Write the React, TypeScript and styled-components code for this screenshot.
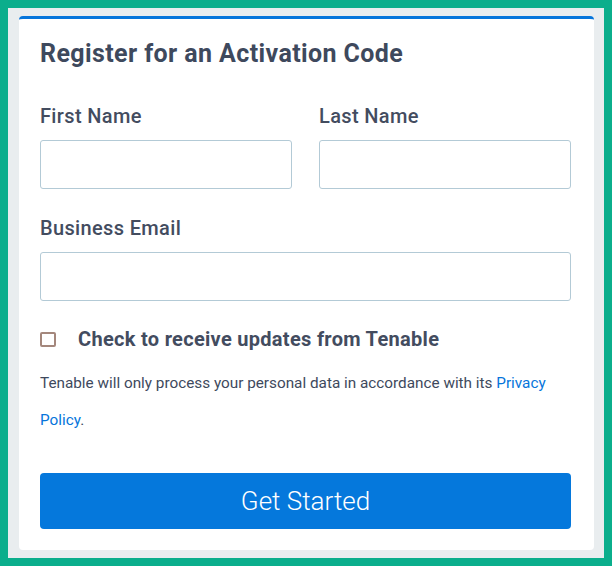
import React from "react";
import styled, { createGlobalStyle } from "styled-components";

const Global = createGlobalStyle`
  html, body { margin: 0; padding: 0; }
  body { background: #0bae8c; font-family: Roboto, "Liberation Sans", sans-serif; }
`;

const Frame = styled.div`
  width: 612px;
  height: 566px;
  box-sizing: border-box;
  padding: 8px;
  background: #0bae8c;
`;

const Backdrop = styled.div`
  height: 100%;
  box-sizing: border-box;
  padding: 8px 10px 8px 11px;
  background: #e9edef;
`;

const Card = styled.form`
  height: 100%;
  box-sizing: border-box;
  background: #ffffff;
  border-top: 3px solid #0675db;
  border-radius: 4px;
  padding: 20px 23px 0 21px;
  display: flex;
  flex-direction: column;
`;

const Title = styled.h1`
  margin: 0;
  font-size: 25px;
  line-height: 30px;
  font-weight: 700;
  color: #3e495d;
  letter-spacing: 0.4px;
`;

const Row = styled.div`
  display: grid;
  grid-template-columns: 1fr 1fr;
  column-gap: 27px;
  margin-top: 35px;
`;

const Field = styled.div<{ $top?: number }>`
  display: flex;
  flex-direction: column;
  margin-top: ${(p) => p.$top ?? 0}px;
`;

const Label = styled.label`
  font-size: 20px;
  line-height: 24px;
  font-weight: 500;
  color: #434c5f;
  letter-spacing: 0.35px;
  margin-bottom: 12px;
`;

const Input = styled.input`
  height: 49px;
  box-sizing: border-box;
  border: 1px solid #b3cad6;
  border-radius: 3px;
  background: #fff;
  padding: 0 12px;
  font-size: 16px;
  outline: none;
`;

const CheckRow = styled.label`
  display: flex;
  align-items: center;
  margin-top: 26px;
  height: 24px;
`;

const Box = styled.span`
  width: 16px;
  height: 15px;
  box-sizing: border-box;
  border: 2px solid #a4877c;
  border-radius: 2px;
  margin-right: 22px;
  flex: none;
`;

const CheckText = styled.span`
  font-size: 20px;
  line-height: 24px;
  font-weight: 700;
  color: #434c5f;
  letter-spacing: 0.3px;
`;

const Notice = styled.p`
  margin: 14px 0 0;
  font-size: 15.3px;
  line-height: 37px;
  color: #3e495d;
`;

const Link = styled.a`
  color: #0675db;
  text-decoration: none;
`;

const Button = styled.button`
  margin-top: 34px;
  height: 56px;
  border: none;
  border-radius: 4px;
  background: #0578dc;
  color: #ffffff;
  font-family: Roboto, "Liberation Sans", sans-serif;
  font-size: 26px;
  font-weight: 300;
  cursor: pointer;
`;

export default function App() {
  return (
    <>
      <Global />
      <Frame>
        <Backdrop>
          <Card onSubmit={(e) => e.preventDefault()}>
            <Title>Register for an Activation Code</Title>
            <Row>
              <Field>
                <Label>First Name</Label>
                <Input type="text" />
              </Field>
              <Field>
                <Label>Last Name</Label>
                <Input type="text" />
              </Field>
            </Row>
            <Field $top={27}>
              <Label>Business Email</Label>
              <Input type="email" />
            </Field>
            <CheckRow>
              <Box />
              <CheckText>Check to receive updates from Tenable</CheckText>
            </CheckRow>
            <Notice>
              Tenable will only process your personal data in accordance with its{" "}
              <Link href="#">Privacy Policy</Link>.
            </Notice>
            <Button type="submit">Get Started</Button>
          </Card>
        </Backdrop>
      </Frame>
    </>
  );
}
